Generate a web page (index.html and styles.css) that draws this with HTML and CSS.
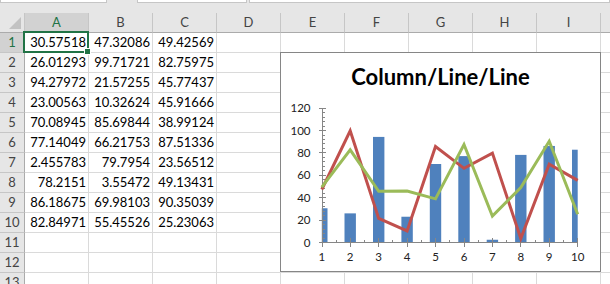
FILE: index.html
```html
<!DOCTYPE html>
<html lang="en">
<head>
    <meta charset="UTF-8">
    <meta name="viewport" content="width=device-width, initial-scale=1.0">
    <title>Column/Line/Line</title>
    <link rel="stylesheet" href="styles.css">
</head>
<body>
    <!-- formula bar remnant -->
    <div class="topbar">
        <div class="box box-name"></div>
        <div class="box box-mid"></div>
        <div class="box box-formula"></div>
    </div>

    <div class="sheet">
        <!-- header row -->
        <div class="corner"><span class="tri"></span></div>
        <div class="colhead active">A</div>
        <div class="colhead">B</div>
        <div class="colhead">C</div>
        <div class="colhead">D</div>
        <div class="colhead">E</div>
        <div class="colhead">F</div>
        <div class="colhead">G</div>
        <div class="colhead">H</div>
        <div class="colhead">I</div>
        <div class="colhead"></div>

        <div class="rowhead active">1</div>
        <div class="cell">30.57518</div><div class="cell">47.32086</div><div class="cell">49.42569</div>
        <div class="cell"></div><div class="cell"></div><div class="cell"></div><div class="cell"></div><div class="cell"></div><div class="cell"></div><div class="cell"></div>

        <div class="rowhead">2</div>
        <div class="cell">26.01293</div><div class="cell">99.71721</div><div class="cell">82.75975</div>
        <div class="cell"></div><div class="cell"></div><div class="cell"></div><div class="cell"></div><div class="cell"></div><div class="cell"></div><div class="cell"></div>

        <div class="rowhead">3</div>
        <div class="cell">94.27972</div><div class="cell">21.57255</div><div class="cell">45.77437</div>
        <div class="cell"></div><div class="cell"></div><div class="cell"></div><div class="cell"></div><div class="cell"></div><div class="cell"></div><div class="cell"></div>

        <div class="rowhead">4</div>
        <div class="cell">23.00563</div><div class="cell">10.32624</div><div class="cell">45.91666</div>
        <div class="cell"></div><div class="cell"></div><div class="cell"></div><div class="cell"></div><div class="cell"></div><div class="cell"></div><div class="cell"></div>

        <div class="rowhead">5</div>
        <div class="cell">70.08945</div><div class="cell">85.69844</div><div class="cell">38.99124</div>
        <div class="cell"></div><div class="cell"></div><div class="cell"></div><div class="cell"></div><div class="cell"></div><div class="cell"></div><div class="cell"></div>

        <div class="rowhead">6</div>
        <div class="cell">77.14049</div><div class="cell">66.21753</div><div class="cell">87.51336</div>
        <div class="cell"></div><div class="cell"></div><div class="cell"></div><div class="cell"></div><div class="cell"></div><div class="cell"></div><div class="cell"></div>

        <div class="rowhead">7</div>
        <div class="cell">2.455783</div><div class="cell">79.7954</div><div class="cell">23.56512</div>
        <div class="cell"></div><div class="cell"></div><div class="cell"></div><div class="cell"></div><div class="cell"></div><div class="cell"></div><div class="cell"></div>

        <div class="rowhead">8</div>
        <div class="cell">78.2151</div><div class="cell">3.55472</div><div class="cell">49.13431</div>
        <div class="cell"></div><div class="cell"></div><div class="cell"></div><div class="cell"></div><div class="cell"></div><div class="cell"></div><div class="cell"></div>

        <div class="rowhead">9</div>
        <div class="cell">86.18675</div><div class="cell">69.98103</div><div class="cell">90.35039</div>
        <div class="cell"></div><div class="cell"></div><div class="cell"></div><div class="cell"></div><div class="cell"></div><div class="cell"></div><div class="cell"></div>

        <div class="rowhead">10</div>
        <div class="cell">82.84971</div><div class="cell">55.45526</div><div class="cell">25.23063</div>
        <div class="cell"></div><div class="cell"></div><div class="cell"></div><div class="cell"></div><div class="cell"></div><div class="cell"></div><div class="cell"></div>

        <div class="rowhead">11</div>
        <div class="cell"></div><div class="cell"></div><div class="cell"></div><div class="cell"></div><div class="cell"></div>
        <div class="cell"></div><div class="cell"></div><div class="cell"></div><div class="cell"></div><div class="cell"></div>

        <div class="rowhead">12</div>
        <div class="cell"></div><div class="cell"></div><div class="cell"></div><div class="cell"></div><div class="cell"></div>
        <div class="cell"></div><div class="cell"></div><div class="cell"></div><div class="cell"></div><div class="cell"></div>

        <div class="rowhead">13</div>
        <div class="cell"></div><div class="cell"></div><div class="cell"></div><div class="cell"></div><div class="cell"></div>
        <div class="cell"></div><div class="cell"></div><div class="cell"></div><div class="cell"></div><div class="cell"></div>

        <!-- selected cell A1 -->
        <div class="selection"><span class="handle"></span></div>

        <!-- chart object floating over the cells -->
        <div class="chart">
            <div class="chart-title">Column/Line/Line</div>
            <svg class="plot" width="319" height="178" viewBox="0 0 319 178">
                <defs>
                    <clipPath id="plotclip"><rect x="40.8" y="0" width="255.9" height="150"/></clipPath>
                </defs>
                <!-- columns (series A) -->
                <g clip-path="url(#plotclip)" fill="#4f81bd">
                    <rect x="35.1" y="115.26" width="11.4" height="34.24"/>
                    <rect x="63.5" y="120.37" width="11.4" height="29.13"/>
                    <rect x="92.0" y="43.91" width="11.4" height="105.59"/>
                    <rect x="120.4" y="123.73" width="11.4" height="25.77"/>
                    <rect x="148.8" y="71.0" width="11.4" height="78.5"/>
                    <rect x="177.3" y="63.1" width="11.4" height="86.4"/>
                    <rect x="205.7" y="146.75" width="11.4" height="2.75"/>
                    <rect x="234.1" y="61.9" width="11.4" height="87.6"/>
                    <rect x="262.5" y="52.97" width="11.4" height="96.53"/>
                    <rect x="291.0" y="56.71" width="11.4" height="92.79"/>
                </g>
                <!-- axes -->
                <g stroke="#868686" stroke-width="1" shape-rendering="crispEdges">
                    <line x1="41" y1="15" x2="41" y2="150"/>
                    <line x1="41" y1="149.5" x2="297" y2="149.5"/>
                    <!-- y major ticks -->
                    <line x1="38" y1="149.5" x2="45" y2="149.5"/>
                    <line x1="38" y1="127.1" x2="45" y2="127.1"/>
                    <line x1="38" y1="104.7" x2="45" y2="104.7"/>
                    <line x1="38" y1="82.3" x2="45" y2="82.3"/>
                    <line x1="38" y1="59.9" x2="45" y2="59.9"/>
                    <line x1="38" y1="37.5" x2="45" y2="37.5"/>
                    <line x1="38" y1="15.1" x2="45" y2="15.1"/>
                    <!-- y minor ticks -->
                    <line x1="41" y1="145" x2="44" y2="145"/><line x1="41" y1="140.5" x2="44" y2="140.5"/><line x1="41" y1="136.1" x2="44" y2="136.1"/><line x1="41" y1="131.6" x2="44" y2="131.6"/>
                    <line x1="41" y1="122.6" x2="44" y2="122.6"/><line x1="41" y1="118.1" x2="44" y2="118.1"/><line x1="41" y1="113.7" x2="44" y2="113.7"/><line x1="41" y1="109.2" x2="44" y2="109.2"/>
                    <line x1="41" y1="100.2" x2="44" y2="100.2"/><line x1="41" y1="95.7" x2="44" y2="95.7"/><line x1="41" y1="91.3" x2="44" y2="91.3"/><line x1="41" y1="86.8" x2="44" y2="86.8"/>
                    <line x1="41" y1="77.8" x2="44" y2="77.8"/><line x1="41" y1="73.3" x2="44" y2="73.3"/><line x1="41" y1="68.9" x2="44" y2="68.9"/><line x1="41" y1="64.4" x2="44" y2="64.4"/>
                    <line x1="41" y1="55.4" x2="44" y2="55.4"/><line x1="41" y1="50.9" x2="44" y2="50.9"/><line x1="41" y1="46.5" x2="44" y2="46.5"/><line x1="41" y1="42" x2="44" y2="42"/>
                    <line x1="41" y1="33" x2="44" y2="33"/><line x1="41" y1="28.5" x2="44" y2="28.5"/><line x1="41" y1="24.1" x2="44" y2="24.1"/><line x1="41" y1="19.6" x2="44" y2="19.6"/>
                    <!-- x ticks -->
                    <line x1="41" y1="149" x2="41" y2="154"/>
                    <line x1="69.2" y1="145" x2="69.2" y2="154"/>
                    <line x1="97.7" y1="145" x2="97.7" y2="154"/>
                    <line x1="126.1" y1="145" x2="126.1" y2="154"/>
                    <line x1="154.5" y1="145" x2="154.5" y2="154"/>
                    <line x1="183" y1="145" x2="183" y2="154"/>
                    <line x1="211.4" y1="145" x2="211.4" y2="154"/>
                    <line x1="239.8" y1="145" x2="239.8" y2="154"/>
                    <line x1="268.2" y1="145" x2="268.2" y2="154"/>
                    <line x1="296.7" y1="145" x2="296.7" y2="154"/>
                    <!-- x minor ticks -->
                    <line x1="55" y1="146.5" x2="55" y2="149.5"/>
                    <line x1="83.4" y1="146.5" x2="83.4" y2="149.5"/>
                    <line x1="111.9" y1="146.5" x2="111.9" y2="149.5"/>
                    <line x1="140.3" y1="146.5" x2="140.3" y2="149.5"/>
                    <line x1="168.7" y1="146.5" x2="168.7" y2="149.5"/>
                    <line x1="197.2" y1="146.5" x2="197.2" y2="149.5"/>
                    <line x1="225.6" y1="146.5" x2="225.6" y2="149.5"/>
                    <line x1="254" y1="146.5" x2="254" y2="149.5"/>
                    <line x1="282.5" y1="146.5" x2="282.5" y2="149.5"/>
                </g>
                <!-- series B -->
                <polyline fill="none" stroke="#c0504d" stroke-width="3" stroke-linejoin="miter"
                    points="40.8,96.5 69.2,37.82 97.7,125.34 126.1,137.93 154.5,53.52 183,75.34 211.4,60.13 239.8,145.52 268.2,71.12 296.7,87.39"/>
                <!-- series C -->
                <polyline fill="none" stroke="#9bbb59" stroke-width="3" stroke-linejoin="miter"
                    points="40.8,94.14 69.2,56.81 97.7,98.23 126.1,98.07 154.5,105.83 183,51.49 211.4,123.11 239.8,94.47 268.2,48.31 296.7,121.24"/>
                <!-- axis labels -->
                <g class="axis-text" text-anchor="end">
                    <text x="29.5" y="153.5">0</text>
                    <text x="29.5" y="131.1">20</text>
                    <text x="29.5" y="108.7">40</text>
                    <text x="29.5" y="86.3">60</text>
                    <text x="29.5" y="63.9">80</text>
                    <text x="29.5" y="41.5">100</text>
                    <text x="29.5" y="19.1">120</text>
                </g>
                <g class="axis-text" text-anchor="middle">
                    <text x="40.8" y="168">1</text>
                    <text x="69.2" y="168">2</text>
                    <text x="97.7" y="168">3</text>
                    <text x="126.1" y="168">4</text>
                    <text x="154.5" y="168">5</text>
                    <text x="183" y="168">6</text>
                    <text x="211.4" y="168">7</text>
                    <text x="239.8" y="168">8</text>
                    <text x="268.2" y="168">9</text>
                    <text x="296.7" y="168">10</text>
                </g>
            </svg>
        </div>
    </div>
</body>
</html>
```

FILE: styles.css
```css
body{
    margin: 0;
    background-color: #ffffff;
    font-family: 'Lato', 'Liberation Sans', sans-serif;
    overflow: hidden;
}
.topbar{
    height: 13px;
    display: flex;
    background-color: #e6e6e6;
}
.box{
    height: 2px;
    background-color: #ffffff;
    border: 1px solid #c6c6c6;
    border-top: none;
}
.box-name{
    width: 105px;
}
.box-mid{
    width: 108px;
    margin-left: 30px;
}
.box-formula{
    flex: 1;
    margin-left: 2px;
}
.sheet{
    position: relative;
    display: grid;
    grid-template-columns: 25px repeat(10, 64px);
    grid-auto-rows: 20px;
    width: max-content;
    font-size: 13px;
}
.corner,.colhead,.rowhead,.cell{
    box-sizing: border-box;
}
.corner{
    position: relative;
    background-color: #e6e6e6;
    border-right: 1px solid #c6c6c6;
    border-bottom: 1px solid #ababab;
}
.tri{
    position: absolute;
    right: 3px;
    bottom: 3px;
    width: 0;
    height: 0;
    border-left: 12px solid transparent;
    border-bottom: 12px solid #c2c2c2;
}
.colhead{
    display: flex;
    align-items: center;
    justify-content: center;
    background-color: #e6e6e6;
    color: #444444;
    border-right: 1px solid #c6c6c6;
    border-bottom: 1px solid #ababab;
    line-height: 19px;
}
.rowhead{
    display: flex;
    align-items: center;
    justify-content: center;
    background-color: #e6e6e6;
    color: #444444;
    border-right: 1px solid #ababab;
    border-bottom: 1px solid #c6c6c6;
    line-height: 19px;
}
.colhead.active,.rowhead.active{
    background-color: #d2d2d2;
    color: #217346;
}
.cell{
    text-align: right;
    padding-right: 2px;
    color: #000000;
    border-right: 1px solid #dadada;
    border-bottom: 1px solid #dadada;
    line-height: 19px;
}
.selection{
    position: absolute;
    left: 23px;
    top: 18px;
    width: 66px;
    height: 22px;
    box-sizing: border-box;
    border: 2px solid #217346;
}
.handle{
    position: absolute;
    right: -4px;
    bottom: -4px;
    width: 5px;
    height: 5px;
    background-color: #217346;
    border: 1px solid #ffffff;
}
.chart{
    position: absolute;
    left: 280px;
    top: 39px;
    width: 321px;
    height: 220px;
    box-sizing: border-box;
    border: 1px solid #868686;
    background-color: #ffffff;
}
.chart-title{
    height: 40px;
    box-sizing: border-box;
    padding-top: 11px;
    text-align: center;
    font-size: 22px;
    font-weight: 700;
    line-height: 26px;
    color: #000000;
}
.plot{
    display: block;
}
.axis-text{
    font-family: 'Lato', 'Liberation Sans', sans-serif;
    font-size: 11.5px;
    fill: #222222;
}
```
